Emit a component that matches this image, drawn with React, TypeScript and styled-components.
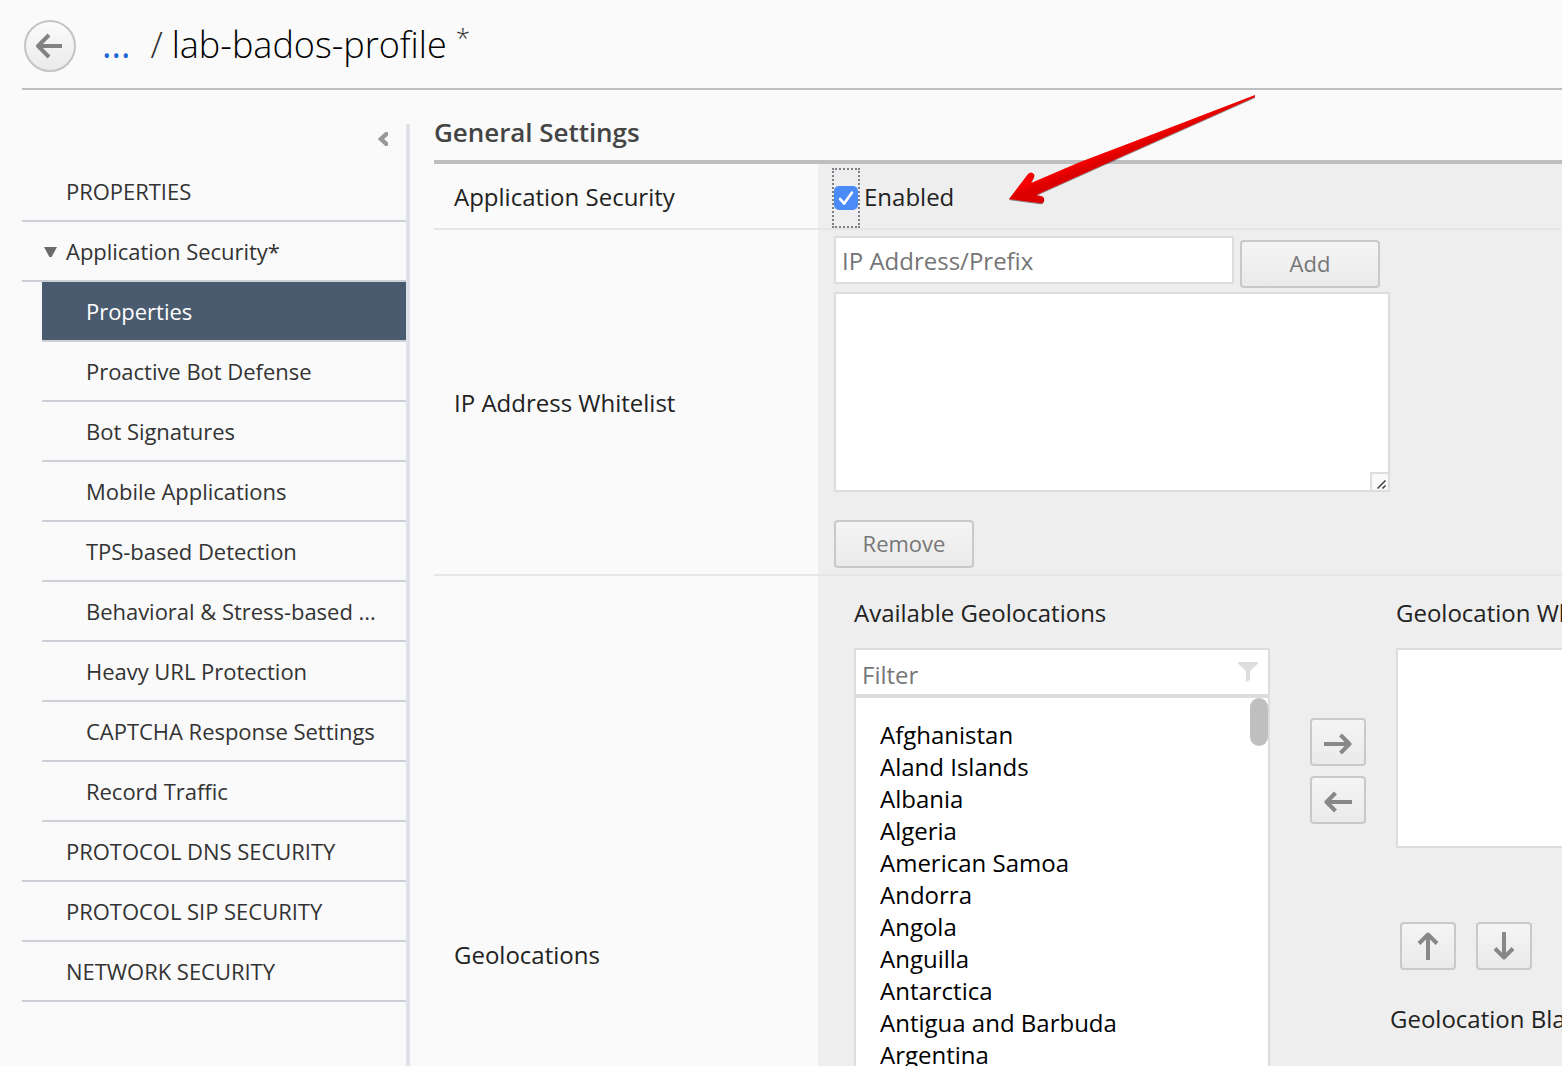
import React from "react";
import styled, { createGlobalStyle, css } from "styled-components";

const GlobalStyle = createGlobalStyle`
  * { box-sizing: border-box; }
  html, body { margin: 0; padding: 0; background: #fafafa; overflow: hidden; }
  body, button, input { font-family: "Open Sans", "Noto Sans", sans-serif; }
`;

const Page = styled.div`
  position: relative;
  display: flex;
  flex-direction: column;
  width: 1562px;
  height: 1066px;
  overflow: hidden;
  background: #fafafa;
  color: #222;
`;

const Header = styled.header`
  display: flex;
  align-items: flex-start;
  flex: none;
  height: 90px;
  margin-left: 22px;
  padding: 19px 0 0 1px;
  border-bottom: 2px solid #bebebe;
  white-space: nowrap;
`;

const BackLink = styled.button`
  display: block;
  padding: 0;
  border: 0;
  background: none;
  width: 54px;
  height: 54px;
  flex: none;
`;

const Crumb = styled.span<{ $size: number; $color: string; $left: number; $top?: number; $weight?: number }>`
  font-size: ${(p) => p.$size}px;
  font-weight: ${(p) => p.$weight ?? 400};
  color: ${(p) => p.$color};
  line-height: 52px;
  margin-left: ${(p) => p.$left}px;
  margin-top: ${(p) => p.$top ?? 0}px;
`;

const Body = styled.div`
  display: flex;
  flex: 1;
  min-height: 0;
`;

const Sidebar = styled.nav`
  width: 388px;
  flex: none;
  margin: 34px 0 0 22px;
  border-right: 4px solid #e0e2e9;
`;

const Collapse = styled.div`
  display: flex;
  justify-content: flex-end;
  height: 38px;
  padding: 8px 18px 0 0;
`;

const NavItem = styled.div<{ $sub?: boolean; $active?: boolean }>`
  display: flex;
  align-items: center;
  height: 60px;
  margin-left: ${(p) => (p.$sub ? 20 : 0)}px;
  padding-left: 44px;
  border-bottom: 2px solid #ccd0d6;
  font-size: 22px;
  line-height: 30px;
  letter-spacing: -0.03px;
  color: #333;
  white-space: nowrap;
  ${(p) =>
    p.$active &&
    css`
      background: #4a5b70;
      color: #fff;
    `}
`;

const Caret = styled.span`
  width: 13px;
  margin: 2px 9px 0 -22px;
  height: 11px;
  svg { display: block; }
`;

const Main = styled.main`
  flex: 1;
  min-width: 0;
  margin-left: 24px;
  overflow: hidden;
`;

const SectionTitle = styled.h2`
  margin: 0;
  height: 74px;
  padding-top: 24px;
  border-bottom: 4px solid #bebebe;
  font-size: 26px;
  font-weight: 600;
  line-height: 36px;
  letter-spacing: -0.05px;
  color: #444;
`;

const Row = styled.section<{ $height: number }>`
  display: grid;
  grid-template-columns: 384px 1fr;
  height: ${(p) => p.$height}px;
  border-bottom: 2px solid #e6e6e6;
`;

const Label = styled.div`
  display: flex;
  align-items: center;
  padding: 2px 0 0 20px;
  font-size: 24px;
  line-height: 32px;
`;

const Field = styled.div`
  min-width: 0;
  background: #eee;
  padding-left: 16px;
  overflow: hidden;
`;

const CheckField = styled(Field)`
  display: flex;
  align-items: center;
  gap: 4px;
  padding: 4px 0 0 14px;
`;

const CheckLabel = styled.span`
  padding-bottom: 2px;
  font-size: 24px;
  line-height: 32px;
`;

const CheckFrame = styled.span`
  display: flex;
  align-items: center;
  justify-content: center;
  width: 28px;
  height: 60px;
  border: 2px dotted #7b8087;
`;

const CheckBox = styled.span`
  display: flex;
  flex: none;
  width: 24px;
  height: 24px;
  border-radius: 5px;
  background: #4b8bf7;
`;

const AddLine = styled.div`
  display: flex;
  gap: 6px;
  padding-top: 6px;
`;

const TextInput = styled.input`
  width: 400px;
  height: 48px;
  padding: 0 6px;
  border: 2px solid #ddd;
  border-radius: 0;
  background: #fff;
  font-size: 24px;
  outline: 0;
  &::placeholder { color: #757575; opacity: 1; }
`;

const Button = styled.button<{ $icon?: boolean }>`
  display: flex;
  align-items: center;
  justify-content: center;
  width: ${(p) => (p.$icon ? 56 : 140)}px;
  height: 48px;
  padding: 0 0 ${(p) => (p.$icon ? 0 : 2)}px;
  border: 2px solid #c9c9c9;
  border-radius: 4px;
  background: linear-gradient(#f5f5f5, #eaeaea);
  font-size: 22px;
  line-height: 30px;
  color: #777;
`;

const AddButton = styled(Button)`
  margin-top: 4px;
`;

const ListArea = styled.div`
  display: flex;
  align-items: flex-end;
  justify-content: flex-end;
  width: 556px;
  height: 200px;
  margin: 4px 0 28px;
  border: 2px solid #ddd;
  background: #fff;
`;

const Grip = styled.span`
  width: 18px;
  height: 18px;
  border: 2px solid #ddd;
  border-width: 2px 0 0 2px;
  background: #f9f9f9;
  svg { display: block; }
`;

const GeoField = styled(Field)`
  display: flex;
  padding: 20px 0 0 36px;
`;

const Column = styled.div`
  flex: none;
  width: 416px;
`;

const ListTitle = styled.div<{ $shift?: number }>`
  height: 52px;
  margin-left: ${(p) => p.$shift ?? 0}px;
  font-size: 24px;
  line-height: 34px;
  white-space: nowrap;
`;

const FilterBox = styled.div`
  display: flex;
  align-items: center;
  justify-content: space-between;
  height: 48px;
  padding: 4px 10px 0 6px;
  border: 2px solid #ddd;
  background: #fff;
  color: #777;
  font-size: 24px;
  svg { display: block; margin-top: -4px; }
`;

const Options = styled.div`
  display: flex;
  justify-content: space-between;
  height: 600px;
  border: 2px solid #ddd;
  background: #fff;
`;

const OptionList = styled.ul`
  list-style: none;
  margin: 0;
  padding: 21px 0 0 24px;
  font-size: 24px;
  line-height: 32px;
  color: #000;
`;

const Thumb = styled.div`
  width: 18px;
  height: 48px;
  border-radius: 9px;
  background: #bfbfbf;
`;

const MoveButtons = styled.div`
  display: flex;
  flex-direction: column;
  flex: none;
  gap: 10px;
  width: 56px;
  margin: 122px 30px 0 40px;
  svg { margin-top: 4px; }
`;

const SelectedBox = styled.div`
  height: 200px;
  border: 2px solid #ddd;
  background: #fff;
`;

const OrderButtons = styled.div`
  display: flex;
  gap: 20px;
  padding: 74px 0 32px 4px;
`;

const ArrowIcon = styled.svg<{ $turn: number }>`
  display: block;
  transform: rotate(${(p) => p.$turn}deg);
`;

const Annotation = styled.svg`
  position: absolute;
  left: 1000px;
  top: 88px;
  pointer-events: none;
`;

const Arrow = ({ turn = 0 }: { turn?: number }) => (
  <ArrowIcon $turn={turn} width="28" height="28" viewBox="0 0 28 28" fill="none" stroke="#888" strokeWidth="4">
    <path d="M0 14H25" />
    <path d="M16.5 5L25.5 14L16.5 23" strokeLinejoin="round" />
  </ArrowIcon>
);

const subItems = [
  "Properties",
  "Proactive Bot Defense",
  "Bot Signatures",
  "Mobile Applications",
  "TPS-based Detection",
  "Behavioral & Stress-based ...",
  "Heavy URL Protection",
  "CAPTCHA Response Settings",
  "Record Traffic",
];

const countries = [
  "Afghanistan",
  "Aland Islands",
  "Albania",
  "Algeria",
  "American Samoa",
  "Andorra",
  "Angola",
  "Anguilla",
  "Antarctica",
  "Antigua and Barbuda",
  "Argentina",
];

export default function App() {
  return (
    <>
      <GlobalStyle />
      <Page>
        <Header>
          <BackLink aria-label="Back">
            <svg width="54" height="54" viewBox="0 0 54 54" fill="none">
              <defs>
                <linearGradient id="disc" x1="0" y1="0" x2="0" y2="1">
                  <stop offset="0" stopColor="#fbfbfb" />
                  <stop offset="1" stopColor="#eaeaea" />
                </linearGradient>
              </defs>
              <circle cx="27" cy="27" r="25" fill="url(#disc)" stroke="#c4c4c4" strokeWidth="2" />
              <path d="M39 27H16M26 16L15 27L26 38" stroke="#828282" strokeWidth="4" strokeLinejoin="round" />
            </svg>
          </BackLink>
          <Crumb $size={36} $color="#1f66cf" $left={25}>...</Crumb>
          <Crumb $size={36} $color="#333" $left={20} $weight={300}>/</Crumb>
          <Crumb $size={36} $color="#000" $left={9} $weight={300}>lab-bados-profile</Crumb>
          <Crumb $size={26} $color="#333" $left={9} $top={-8} $weight={300}>*</Crumb>
        </Header>
        <Body>
          <Sidebar>
            <Collapse>
              <svg width="10" height="14" viewBox="0 0 10 14">
                <path d="M10 0.5L3 7L10 13.5" fill="none" stroke="#999" strokeWidth="4.4" />
              </svg>
            </Collapse>
            <NavItem>PROPERTIES</NavItem>
            <NavItem>
              <Caret>
                <svg width="13" height="11" viewBox="0 0 13 11">
                  <path d="M0 0H13L7.6 10H5.4Z" fill="#6b6b6b" />
                </svg>
              </Caret>
              Application Security*
            </NavItem>
            {subItems.map((item, i) => (
              <NavItem key={item} $sub $active={i === 0}>{item}</NavItem>
            ))}
            <NavItem>PROTOCOL DNS SECURITY</NavItem>
            <NavItem>PROTOCOL SIP SECURITY</NavItem>
            <NavItem>NETWORK SECURITY</NavItem>
          </Sidebar>
          <Main>
            <SectionTitle>General Settings</SectionTitle>
            <Row $height={66}>
              <Label>Application Security</Label>
              <CheckField>
                <CheckFrame>
                  <CheckBox>
                    <svg width="24" height="24" viewBox="0 0 24 24" fill="none">
                      <path d="M6 13L10.2 17.6L18 6.5" stroke="#fff" strokeWidth="2.6" strokeLinecap="round" strokeLinejoin="round" />
                    </svg>
                  </CheckBox>
                </CheckFrame>
                <CheckLabel>Enabled</CheckLabel>
              </CheckField>
            </Row>
            <Row $height={346}>
              <Label>IP Address Whitelist</Label>
              <Field>
                <AddLine>
                  <TextInput placeholder="IP Address/Prefix" />
                  <AddButton>Add</AddButton>
                </AddLine>
                <ListArea>
                  <Grip>
                    <svg width="16" height="16" viewBox="0 0 16 16" stroke="#444" strokeWidth="1.6">
                      <path d="M5.5 14.5L13.5 6.5M10.5 14.5L13.5 11.5" />
                    </svg>
                  </Grip>
                </ListArea>
                <Button>Remove</Button>
              </Field>
            </Row>
            <Row $height={758}>
              <Label>Geolocations</Label>
              <GeoField>
                <Column>
                  <ListTitle>Available Geolocations</ListTitle>
                  <FilterBox>
                    Filter
                    <svg width="20" height="20" viewBox="0 0 20 20">
                      <path d="M0 0H20V1.5L12 9V18L8 20V9L0 1.5Z" fill="#ddd" />
                    </svg>
                  </FilterBox>
                  <Options>
                    <OptionList>
                      {countries.map((name) => (
                        <li key={name}>{name}</li>
                      ))}
                    </OptionList>
                    <Thumb />
                  </Options>
                </Column>
                <MoveButtons>
                  <Button $icon aria-label="Add"><Arrow /></Button>
                  <Button $icon aria-label="Remove"><Arrow turn={180} /></Button>
                </MoveButtons>
                <Column>
                  <ListTitle>Geolocation Whitelist</ListTitle>
                  <SelectedBox />
                  <OrderButtons>
                    <Button $icon aria-label="Up"><Arrow turn={-90} /></Button>
                    <Button $icon aria-label="Down"><Arrow turn={90} /></Button>
                  </OrderButtons>
                  <ListTitle $shift={-6}>Geolocation Blacklist</ListTitle>
                </Column>
              </GeoField>
            </Row>
          </Main>
        </Body>
        <Annotation width="264" height="124" viewBox="0 0 264 124">
          <defs>
            <linearGradient id="red" gradientUnits="userSpaceOnUse" x1="118" y1="55" x2="124" y2="70">
              <stop offset="0.3" stopColor="#f60404" />
              <stop offset="0.65" stopColor="#dc0000" />
            </linearGradient>
            <filter id="shade" x="-5%" y="-5%" width="110%" height="115%">
              <feDropShadow dx="0" dy="1" stdDeviation="0.7" floodColor="#000" floodOpacity="0.5" />
            </filter>
          </defs>
          <path
            filter="url(#shade)"
            fill="url(#red)"
            d="M9 111L28 86Q31 83 34 86Q35 88 33 91L31 95L80 74L130 55L255 7L255 9L125 67L36 107L41 108Q45 109 44 113Q43 116 39 115Z"
          />
        </Annotation>
      </Page>
    </>
  );
}
